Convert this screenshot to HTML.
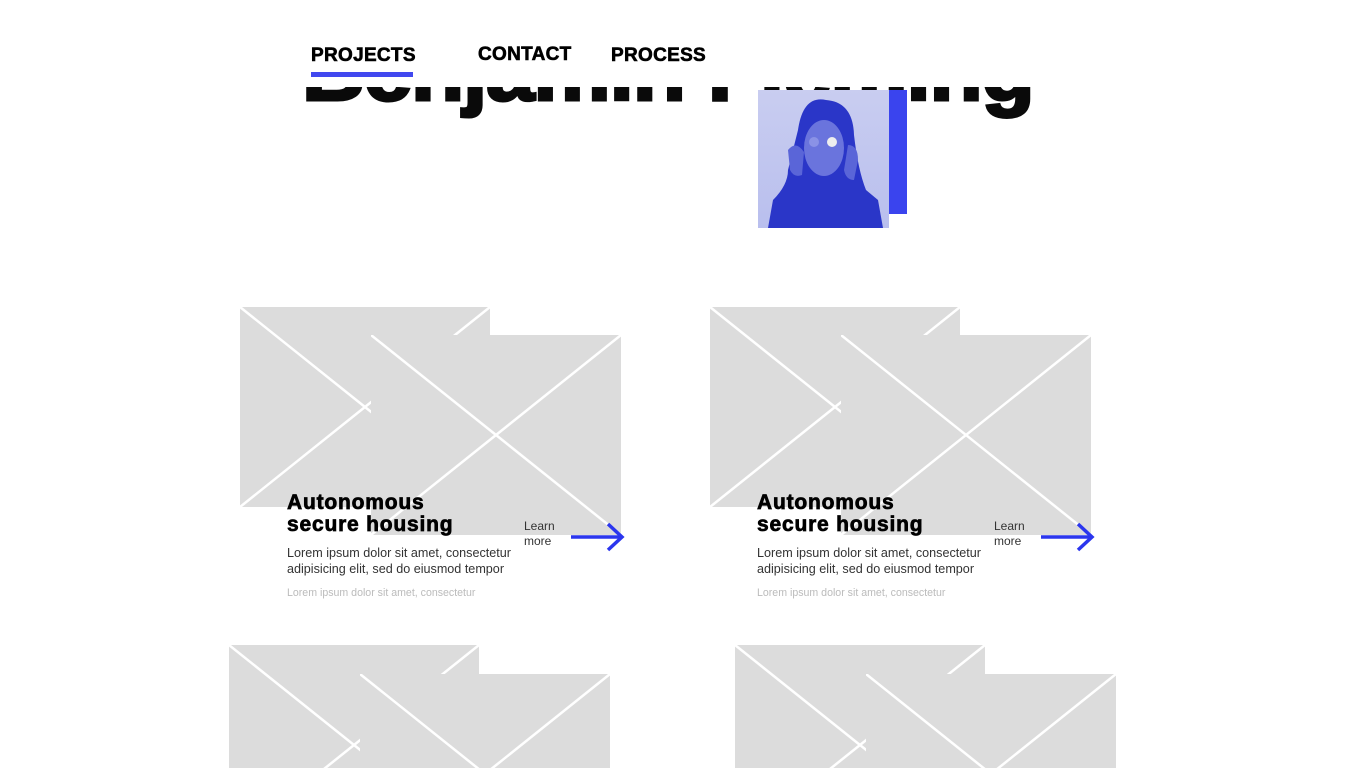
<!DOCTYPE html>
<html style="width:1366px;height:768px;overflow:hidden"><head><meta charset="utf-8"><style>
*{margin:0;padding:0;box-sizing:border-box}
body{width:1366px;height:768px;overflow:hidden;background:#fff;position:relative;font-family:"Liberation Sans",sans-serif}
.a{position:absolute}
.nav{font-weight:900;font-size:19px;letter-spacing:0.3px;color:#000;-webkit-text-stroke:0.6px #000}
.title{left:0;top:87px;width:1366px;height:40px;overflow:hidden}
.title div{position:absolute;left:302px;top:-55px;font-size:82px;font-weight:900;line-height:1;white-space:nowrap;transform-origin:0 0;transform:scaleX(1.06);color:#0a0a0a;letter-spacing:-1px;-webkit-text-stroke:3px #0a0a0a}
.ph{position:absolute;width:250px;height:200px;background:#dcdcdc;overflow:hidden}
.ph svg{display:block}
.h{font-weight:900;font-size:21px;line-height:22px;color:#000;letter-spacing:0.8px;-webkit-text-stroke:0.7px #000}
.p{font-size:12.6px;line-height:16px;color:#333}
.s{font-size:10.6px;color:#bbb}
.lm{font-size:12px;line-height:15px;color:#333}
</style></head><body>
<div class="a title"><div>Benjamin Fleming</div></div>
<div class="a nav" style="left:311px;top:45px">PROJECTS</div>
<div class="a" style="left:311px;top:72px;width:102px;height:5px;background:#4148ef"></div>
<div class="a nav" style="left:478px;top:44px">CONTACT</div>
<div class="a nav" style="left:611px;top:45px">PROCESS</div>

<div class="a" style="left:889px;top:90px;width:18px;height:124px;background:#3a44ee"></div>
<div class="a" style="left:758px;top:90px;width:131px;height:138px;background:linear-gradient(#c9cdf0,#b9bfee);overflow:hidden">
<svg width="131" height="138" viewBox="0 0 131 138">
<path d="M40 40 Q45 5 68 10 Q95 12 96 45 Q100 80 108 100 L120 110 L125 138 L10 138 L15 110 Q30 95 30 80 Q35 60 40 40Z" fill="#2a36c8"/>
<ellipse cx="66" cy="58" rx="20" ry="28" fill="#6a74dd"/>
<circle cx="74" cy="52" r="5" fill="#eee"/>
<circle cx="56" cy="52" r="5" fill="#8a92e6"/>
<path d="M30 60 Q38 50 46 62 L44 85 Q36 88 32 80Z M90 55 Q100 55 100 70 L96 90 Q88 90 86 80Z" fill="#5a65d8"/>
</svg></div>

<div class="ph" style="left:240px;top:307px"><svg width="250" height="200"><path d="M0 0L250 200M250 0L0 200" stroke="#fff" stroke-width="2.5"/></svg></div>
<div class="ph" style="left:371px;top:335px"><svg width="250" height="200"><path d="M0 0L250 200M250 0L0 200" stroke="#fff" stroke-width="2.5"/></svg></div>
<div class="a h" style="left:287px;top:492px">Autonomous<br>secure housing</div>
<div class="a p" style="left:287px;top:545px">Lorem ipsum dolor sit amet, consectetur<br>adipisicing elit, sed do eiusmod tempor</div>
<div class="a s" style="left:287px;top:587px">Lorem ipsum dolor sit amet, consectetur</div>
<div class="a lm" style="left:524px;top:519px">Learn<br>more</div>
<svg class="a" style="left:570px;top:522px" width="56" height="30"><path d="M1 15H52M38 2L52 15L38 28" stroke="#2b36ee" stroke-width="3.5" fill="none"/></svg>

<div class="ph" style="left:710px;top:307px"><svg width="250" height="200"><path d="M0 0L250 200M250 0L0 200" stroke="#fff" stroke-width="2.5"/></svg></div>
<div class="ph" style="left:841px;top:335px"><svg width="250" height="200"><path d="M0 0L250 200M250 0L0 200" stroke="#fff" stroke-width="2.5"/></svg></div>
<div class="a h" style="left:757px;top:492px">Autonomous<br>secure housing</div>
<div class="a p" style="left:757px;top:545px">Lorem ipsum dolor sit amet, consectetur<br>adipisicing elit, sed do eiusmod tempor</div>
<div class="a s" style="left:757px;top:587px">Lorem ipsum dolor sit amet, consectetur</div>
<div class="a lm" style="left:994px;top:519px">Learn<br>more</div>
<svg class="a" style="left:1040px;top:522px" width="56" height="30"><path d="M1 15H52M38 2L52 15L38 28" stroke="#2b36ee" stroke-width="3.5" fill="none"/></svg>

<div class="ph" style="left:229px;top:645px;height:123px"><svg width="250" height="200"><path d="M0 0L250 200M250 0L0 200" stroke="#fff" stroke-width="2.5"/></svg></div>
<div class="ph" style="left:360px;top:674px;height:94px"><svg width="250" height="200"><path d="M0 0L250 200M250 0L0 200" stroke="#fff" stroke-width="2.5"/></svg></div>
<div class="ph" style="left:735px;top:645px;height:123px"><svg width="250" height="200"><path d="M0 0L250 200M250 0L0 200" stroke="#fff" stroke-width="2.5"/></svg></div>
<div class="ph" style="left:866px;top:674px;height:94px"><svg width="250" height="200"><path d="M0 0L250 200M250 0L0 200" stroke="#fff" stroke-width="2.5"/></svg></div>
</body></html>
